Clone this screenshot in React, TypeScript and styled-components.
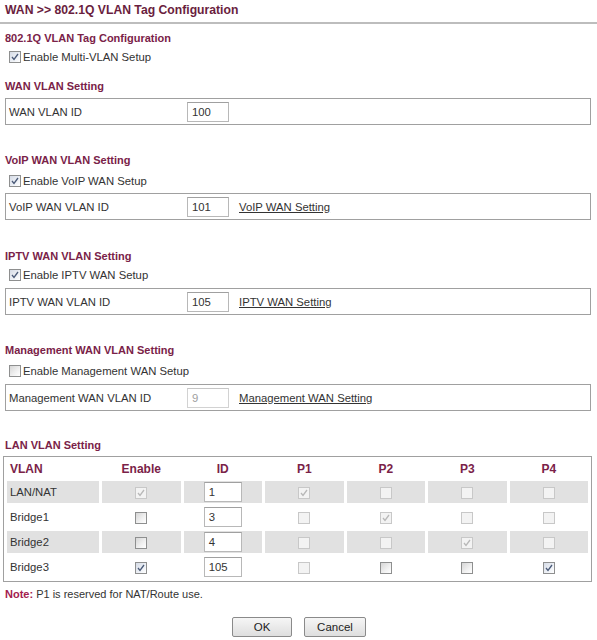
import styled, { createGlobalStyle } from "styled-components";

const GlobalStyle = createGlobalStyle`
  html, body {
    margin: 0;
    padding: 0;
    background: #fff;
  }
  body {
    font-family: "Liberation Sans", Arial, sans-serif;
    font-size: 11.3px;
    color: #333;
  }
`;

const Page = styled.div`
  width: 597px;
  padding: 0 6px 0 5px;
  box-sizing: border-box;
`;

const Title = styled.div`
  height: 20px;
  line-height: 20px;
  font-size: 12.2px;
  font-weight: bold;
  color: #6a1e3e;
`;

const Rule = styled.div`
  height: 2px;
  margin: 2px -6px 0 -5px;
  background: #bdbdbd;
`;

const Heading = styled.div<{ $top: number }>`
  margin-top: ${p => p.$top}px;
  height: 16px;
  line-height: 16px;
  font-size: 11px;
  font-weight: bold;
  color: #7a2248;
`;

const CheckRow = styled.label<{ $top: number }>`
  display: flex;
  align-items: center;
  gap: 2px;
  margin-top: ${p => p.$top}px;
  padding-left: 4px;
  height: 18px;
`;

const Box = styled.div<{ $top: number }>`
  margin-top: ${p => p.$top}px;
  display: flex;
  align-items: center;
  height: 25px;
  border: 1px solid #a0a0a0;
  padding-left: 3px;
`;

const Label = styled.span`
  width: 178px;
`;

const TextBox = styled.span<{ $w: number; $disabled?: boolean }>`
  display: inline-flex;
  align-items: center;
  box-sizing: border-box;
  width: ${p => p.$w}px;
  height: 20px;
  padding-left: 4px;
  border: 1px solid ${p => (p.$disabled ? "#d2d2d2" : "#b8b8b8")};
  border-top-color: ${p => (p.$disabled ? "#c6c6c6" : "#a0a0a0")};
  background: #fff;
  color: ${p => (p.$disabled ? "#a0a0a0" : "#333")};
`;

const SettingLink = styled.a`
  margin-left: 10px;
  color: #333;
  text-decoration: underline;
`;

const CheckBox = styled.span<{ $disabled?: boolean; $checked?: boolean }>`
  display: inline-flex;
  align-items: center;
  justify-content: center;
  width: 12px;
  height: 12px;
  box-sizing: border-box;
  border: 1px solid ${p => (p.$disabled ? "#c8c8c8" : "#8e8f8f")};
  background: ${p =>
    p.$disabled
      ? "#f3f3f3"
      : p.$checked
      ? "linear-gradient(135deg, #d5dbe6 0%, #eef1f6 60%, #fff 100%)"
      : "linear-gradient(135deg, #d6d6d6 0%, #f1f1f1 60%, #fff 100%)"};
  svg {
    display: block;
  }
`;

function Check({ checked, disabled }: { checked?: boolean; disabled?: boolean }) {
  return (
    <CheckBox $disabled={disabled} $checked={checked}>
      {checked && (
        <svg width="10" height="10" viewBox="0 0 10 10">
          <path
            d="M2 5 L4 7.5 L8 2"
            fill="none"
            stroke={disabled ? "#b8b8b8" : "#4a5a78"}
            strokeWidth="1.3"
          />
        </svg>
      )}
    </CheckBox>
  );
}

const Grid = styled.table`
  margin: 3px -1px 0 -2px;
  width: calc(100% + 3px);
  border: 1px solid #a0a0a0;
  border-spacing: 3px;
  table-layout: fixed;
`;

const Th = styled.th<{ $left?: boolean }>`
  height: 18px;
  padding: 0 0 0 ${p => (p.$left ? 3 : 0)}px;
  text-align: ${p => (p.$left ? "left" : "center")};
  font-size: 12px;
  font-weight: bold;
  color: #7a2248;
`;

const Td = styled.td<{ $shade: boolean; $left?: boolean }>`
  height: 22px;
  padding: 0 0 0 ${p => (p.$left ? 3 : 0)}px;
  background: ${p => (p.$shade ? "#e1e1e1" : "#fff")};
  text-align: ${p => (p.$left ? "left" : "center")};
  vertical-align: middle;
  ${CheckBox}, ${TextBox} {
    vertical-align: middle;
  }
`;

const Note = styled.div`
  margin-top: 4px;
  height: 16px;
  line-height: 16px;
  font-size: 11px;
  b {
    color: #a3204e;
  }
`;

const Buttons = styled.div`
  display: flex;
  justify-content: center;
  gap: 12px;
  margin-top: 15px;
  padding-left: 2px;
`;

const Button = styled.button<{ $w: number }>`
  width: ${p => p.$w}px;
  height: 20px;
  padding: 0;
  border: 1px solid #8a8a8a;
  border-radius: 2px;
  background: linear-gradient(#f6f6f6, #dedede);
  font-family: "Liberation Sans", Arial, sans-serif;
  font-size: 11.5px;
  color: #222;
`;

interface VlanRow {
  name: string;
  enable: [boolean, boolean];
  id: string;
  ports: [boolean, boolean][];
}

// [checked, disabled]
const rows: VlanRow[] = [
  {
    name: "LAN/NAT",
    enable: [true, true],
    id: "1",
    ports: [[true, true], [false, true], [false, true], [false, true]],
  },
  {
    name: "Bridge1",
    enable: [false, false],
    id: "3",
    ports: [[false, true], [true, true], [false, true], [false, true]],
  },
  {
    name: "Bridge2",
    enable: [false, false],
    id: "4",
    ports: [[false, true], [false, true], [true, true], [false, true]],
  },
  {
    name: "Bridge3",
    enable: [true, false],
    id: "105",
    ports: [[false, true], [false, false], [false, false], [true, false]],
  },
];

export default function App() {
  return (
    <Page>
      <GlobalStyle />
      <Title>WAN &gt;&gt; 802.1Q VLAN Tag Configuration</Title>
      <Rule />

      <Heading $top={6}>802.1Q VLAN Tag Configuration</Heading>
      <CheckRow $top={2}>
        <Check checked /> Enable Multi-VLAN Setup
      </CheckRow>

      <Heading $top={12}>WAN VLAN Setting</Heading>
      <Box $top={4}>
        <Label>WAN VLAN ID</Label>
        <TextBox $w={42}>100</TextBox>
      </Box>

      <Heading $top={27}>VoIP WAN VLAN Setting</Heading>
      <CheckRow $top={4}>
        <Check checked /> Enable VoIP WAN Setup
      </CheckRow>
      <Box $top={3}>
        <Label>VoIP WAN VLAN ID</Label>
        <TextBox $w={42}>101</TextBox>
        <SettingLink>VoIP WAN Setting</SettingLink>
      </Box>

      <Heading $top={28}>IPTV WAN VLAN Setting</Heading>
      <CheckRow $top={2}>
        <Check checked /> Enable IPTV WAN Setup
      </CheckRow>
      <Box $top={4}>
        <Label>IPTV WAN VLAN ID</Label>
        <TextBox $w={42}>105</TextBox>
        <SettingLink>IPTV WAN Setting</SettingLink>
      </Box>

      <Heading $top={27}>Management WAN VLAN Setting</Heading>
      <CheckRow $top={4}>
        <Check /> Enable Management WAN Setup
      </CheckRow>
      <Box $top={4}>
        <Label>Management WAN VLAN ID</Label>
        <TextBox $w={42} $disabled>9</TextBox>
        <SettingLink>Management WAN Setting</SettingLink>
      </Box>

      <Heading $top={26}>LAN VLAN Setting</Heading>
      <Grid>
        <colgroup>
          <col style={{ width: 92 }} />
        </colgroup>
        <thead>
          <tr>
            <Th $left>VLAN</Th>
            <Th>Enable</Th>
            <Th>ID</Th>
            <Th>P1</Th>
            <Th>P2</Th>
            <Th>P3</Th>
            <Th>P4</Th>
          </tr>
        </thead>
        <tbody>
          {rows.map((r, i) => (
            <tr key={r.name}>
              <Td $shade={i % 2 === 0} $left>{r.name}</Td>
              <Td $shade={i % 2 === 0}>
                <Check checked={r.enable[0]} disabled={r.enable[1]} />
              </Td>
              <Td $shade={i % 2 === 0}>
                <TextBox $w={38}>{r.id}</TextBox>
              </Td>
              {r.ports.map(([c, d], j) => (
                <Td key={j} $shade={i % 2 === 0}>
                  <Check checked={c} disabled={d} />
                </Td>
              ))}
            </tr>
          ))}
        </tbody>
      </Grid>

      <Note>
        <b>Note:</b> P1 is reserved for NAT/Route use.
      </Note>

      <Buttons>
        <Button $w={60}>OK</Button>
        <Button $w={62}>Cancel</Button>
      </Buttons>
    </Page>
  );
}
